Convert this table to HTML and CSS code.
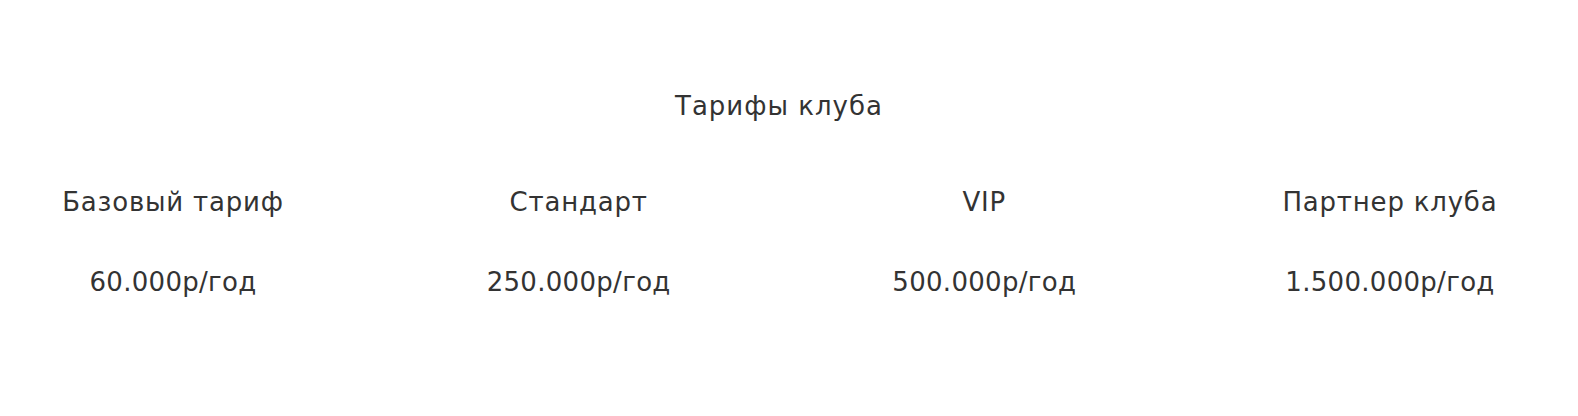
FILE: index.html
```html
<!DOCTYPE html>
<html lang="ru">
<head>
<meta charset="utf-8">
<title>Тарифы клуба</title>
<link rel="stylesheet" href="styles.css">
</head>
<body>
<section class="tariffs">
  <h2 class="tariffs-title">Тарифы клуба</h2>
  <div class="tariffs-grid">
    <div class="tariff">
      <div class="tariff-name">Базовый тариф</div>
      <div class="tariff-price">60.000р/год</div>
    </div>
    <div class="tariff">
      <div class="tariff-name">Стандарт</div>
      <div class="tariff-price">250.000р/год</div>
    </div>
    <div class="tariff">
      <div class="tariff-name">VIP</div>
      <div class="tariff-price">500.000р/год</div>
    </div>
    <div class="tariff">
      <div class="tariff-name">Партнер клуба</div>
      <div class="tariff-price">1.500.000р/год</div>
    </div>
  </div>
</section>
</body>
</html>
```
FILE: styles.css
```css
html, body {
  margin: 0;
  padding: 0;
  background: #ffffff;
}

body {
  font-family: "DejaVu Sans", "Open Sans", sans-serif;
  color: #333333;
  font-size: 26px;
  line-height: 1.2;
  letter-spacing: 1px;
}

.tariffs {
  padding-top: 91px;
  padding-bottom: 100px;
}

.tariffs-title {
  margin: 0;
  font-size: 26px;
  font-weight: normal;
  line-height: 1.2;
  text-align: center;
  padding-right: 20px;
}

.tariffs-grid {
  display: grid;
  grid-template-columns: repeat(4, 340px);
  column-gap: 65.67px;
  padding-left: 3px;
  margin-top: 65px;
}

.tariff {
  display: flex;
  flex-direction: column;
  align-items: center;
  gap: 49px;
  text-align: center;
}

.tariff-name,
.tariff-price {
  white-space: nowrap;
}

.tariff-name {
  letter-spacing: 0.8px;
}

.tariff-price {
  letter-spacing: 0.3px;
}
```
